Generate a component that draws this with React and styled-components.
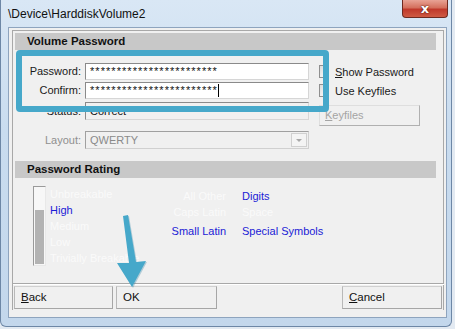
import React from "react";
import styled, { createGlobalStyle } from "styled-components";

const Global = createGlobalStyle`
  html, body { margin: 0; padding: 0; background: #e3eaf2; }
  body { font-family: "Liberation Sans", Arial, sans-serif; }
`;

const Window = styled.div`
  position: relative;
  width: 452px;
  height: 327px;
  box-sizing: border-box;
  display: flex;
  flex-direction: column;
  background: linear-gradient(180deg, #d9e7f5 0%, #c9dcef 40%, #c3d7ec 100%);
  border: 1px solid #6d87a6;
  border-top: none;
  border-radius: 0 0 6px 6px;
`;

const TitleBar = styled.div`
  height: 27px;
  display: flex;
  align-items: center;
  justify-content: space-between;
  padding-left: 7px;
`;

const Title = styled.span`
  font-size: 12px;
  color: #111;
  margin-top: 1px;
`;

const CloseButton = styled.div`
  align-self: flex-start;
  width: 46px;
  height: 18px;
  margin-right: 3px;
  box-sizing: border-box;
  border: 1px solid #6e2a20;
  border-top: none;
  border-radius: 0 0 4px 4px;
  background: linear-gradient(180deg, #e8a395 0%, #d4705d 45%, #c0392b 55%, #cf5a43 100%);
  display: flex;
  align-items: center;
  justify-content: center;
  color: #fff;
  font: bold 13px "DejaVu Sans", sans-serif;
  text-shadow: 0 0 2px #5a1a10, 0 0 1px #5a1a10;
`;

const Client = styled.div`
  flex: 1;
  margin: 0 4px 8px 7px;
  background: #f0f0f0;
  border: 1px solid #8ea4be;
  padding: 2px 2px 7px 3px;
  display: flex;
`;

const Panel = styled.div`
  flex: 1;
  border: 1px solid #a8a8a8;
  border-bottom: none;
  display: flex;
  flex-direction: column;
`;

const SectionHeader = styled.div`
  margin: ${(p) => p.$top}px 0 0 2px;
  height: 17px;
  width: 421px;
  background: #c8c8c8;
  font-size: 11.5px;
  font-weight: bold;
  color: #111;
  line-height: 17px;
  padding-left: 12px;
  box-sizing: border-box;
`;

const Form = styled.div`
  display: flex;
  flex-direction: column;
  padding-top: 13px;
`;

const Row = styled.div`
  display: grid;
  grid-template-columns: 68px 224px 107px;
  column-gap: 4px;
  align-items: start;
  margin-top: ${(p) => p.$top || 0}px;
`;

const Label = styled.label`
  text-align: right;
  font-size: 11px;
  line-height: ${(p) => p.$h || 17}px;
  color: ${(p) => (p.$disabled ? "#8f8f8f" : "#1a1a1a")};
`;

const Field = styled.div`
  height: ${(p) => p.$h || 17}px;
  box-sizing: border-box;
  border: 1px solid;
  border-color: #8a8a8a #d6d6d6 #d6d6d6 #8a8a8a;
  background: ${(p) => (p.$readOnly ? "#f0f0f0" : "#fff")};
  font-size: 11px;
  line-height: ${(p) => (p.$h || 17) - 2}px;
  padding-left: 4px;
  color: #111;
  letter-spacing: ${(p) => (p.$stars ? "1.05px" : "0")};
  display: flex;
  align-items: center;
`;

const Caret = styled.span`
  display: inline-block;
  width: 1px;
  height: 13px;
  background: #000;
`;

const Combo = styled.div`
  height: 18px;
  box-sizing: border-box;
  border: 1px solid;
  border-color: #a0a0a0 #d0d0d0 #d0d0d0 #a0a0a0;
  background: #f0f0f0;
  display: flex;
  align-items: center;
  justify-content: space-between;
  padding-left: 4px;
  font-size: 11px;
  color: #8a8a8a;
`;

const ComboArrow = styled.div`
  width: 16px;
  height: 14px;
  margin-right: 1px;
  box-sizing: border-box;
  border: 1px solid #d0d0d0;
  background: #f4f4f4;
  display: flex;
  align-items: center;
  justify-content: center;
  &::after {
    content: "";
    border-left: 3px solid transparent;
    border-right: 3px solid transparent;
    border-top: 3px solid #a8a8a8;
  }
`;

const CheckRow = styled.div`
  display: flex;
  align-items: center;
  gap: 6px;
  margin-left: 6px;
  height: 17px;
  font-size: 11px;
  color: #1a1a1a;
`;

const CheckBox = styled.span`
  width: 10px;
  height: 13px;
  box-sizing: border-box;
  border: 1px solid #8f8f8f;
  border-right: none;
  background: linear-gradient(135deg, #dcdcdc, #fff);
`;

const SideButton = styled.div`
  margin: 3px 0 0 6px;
  height: 21px;
  box-sizing: border-box;
  border: 1px solid;
  border-color: #dedede #b0b0b0 #b0b0b0 #dedede;
  font-size: 11px;
  line-height: 19px;
  padding-left: 5px;
  color: #a4a4a4;
`;

const Rating = styled.div`
  display: flex;
  height: 105px;
  padding-left: 20px;
  box-sizing: border-box;
`;

const Meter = styled.div`
  margin-top: 8px;
  width: 13px;
  height: 80px;
  box-sizing: border-box;
  border: 1px solid;
  border-color: #9a9a9a #e8e8e8 #e8e8e8 #9a9a9a;
  background: #f7f7f7;
  padding: 1px;
  display: flex;
  flex-direction: column;
  justify-content: flex-end;
`;

const MeterFill = styled.div`
  background: #b3b3b3;
`;

const Levels = styled.div`
  margin: 8px 0 0 4px;
  width: 100px;
  display: flex;
  flex-direction: column;
`;

const Level = styled.span`
  font-size: 11px;
  line-height: 16px;
  white-space: nowrap;
  color: ${(p) => (p.$on ? "#1b1bd6" : "#fafafa")};
`;

const Charsets = styled.div`
  margin-top: 10px;
  display: grid;
  grid-template-columns: 76px auto;
  column-gap: 16px;
  grid-auto-rows: 16px;
  align-content: start;
`;

const Charset = styled.span`
  font-size: 11px;
  line-height: 16px;
  white-space: nowrap;
  text-align: ${(p) => (p.$right ? "right" : "left")};
  color: ${(p) => (p.$on ? "#1b1bd6" : "#fafafa")};
  margin-top: ${(p) => (p.$last ? 3 : 0)}px;
`;

const Separator = styled.div`
  height: 1px;
  background: #a8a8a8;
  border-bottom: 1px solid #fff;
  margin-right: -1px;
`;

const ButtonRow = styled.div`
  display: flex;
  gap: 3px;
  padding: 1px 1px 0 1px;
`;

const Button = styled.div`
  width: ${(p) => p.$w || 100}px;
  height: 23px;
  box-sizing: border-box;
  border: 1px solid;
  border-color: #d0d0d0 #a6a6a6 #a6a6a6 #b8b8b8;
  font-size: 11.5px;
  line-height: 21px;
  padding-left: 6px;
  color: #111;
  margin-left: ${(p) => (p.$push ? "auto" : "0")};
`;

const Highlight = styled.div`
  position: absolute;
  left: 15px;
  top: 50px;
  width: 313px;
  height: 62px;
  box-sizing: border-box;
  border: 6px solid #46a8ca;
  border-radius: 4px;
  pointer-events: none;
`;

const Arrow = styled.svg`
  position: absolute;
  left: 110px;
  top: 210px;
  pointer-events: none;
`;

const u = (s) => <span style={{ textDecoration: "underline" }}>{s}</span>;

export default function App() {
  return (
    <>
      <Global />
      <Window>
        <TitleBar>
          <Title>\Device\HarddiskVolume2</Title>
          <CloseButton>x</CloseButton>
        </TitleBar>
        <Client>
          <Panel>
            <SectionHeader $top={2}>Volume Password</SectionHeader>
            <Form>
              <Row>
                <Label>Password:</Label>
                <Field $stars>************************</Field>
                <CheckRow>
                  <CheckBox />
                  <span>{u("S")}how Password</span>
                </CheckRow>
              </Row>
              <Row $top={2}>
                <Label>Confirm:</Label>
                <Field $stars>
                  ************************
                  <Caret />
                </Field>
                <CheckRow>
                  <CheckBox />
                  <span>Use Keyfiles</span>
                </CheckRow>
              </Row>
              <Row $top={3}>
                <Label $h={18}>Status:</Label>
                <Field $h={18} $readOnly>Correct</Field>
                <SideButton>{u("K")}eyfiles</SideButton>
              </Row>
              <Row $top={5}>
                <Label $h={18} $disabled>Layout:</Label>
                <Combo>
                  QWERTY
                  <ComboArrow />
                </Combo>
              </Row>
            </Form>
            <SectionHeader $top={12}>Password Rating</SectionHeader>
            <Rating>
              <Meter>
                <MeterFill style={{ height: `${(55 / 78) * 100}%` }} />
              </Meter>
              <Levels>
                <Level>Unbreakable</Level>
                <Level $on>High</Level>
                <Level>Medium</Level>
                <Level>Low</Level>
                <Level>Trivially Breakable</Level>
              </Levels>
              <Charsets>
                <Charset $right>All Other</Charset>
                <Charset $on>Digits</Charset>
                <Charset $right>Caps Latin</Charset>
                <Charset>Space</Charset>
                <Charset $right $on $last>Small Latin</Charset>
                <Charset $on $last>Special Symbols</Charset>
              </Charsets>
            </Rating>
            <Separator />
            <ButtonRow>
              <Button $w={99}>{u("B")}ack</Button>
              <Button $w={101}>OK</Button>
              <Button $w={100} $push>{u("C")}ancel</Button>
            </ButtonRow>
          </Panel>
        </Client>
        <Highlight />
        <Arrow width="40" height="82" viewBox="0 0 40 82">
          <polygon
            points="12,6 17,5 25,52 35,51 21,77 6,53 18,53"
            fill="#3c8aa8"
            opacity="0.35"
            transform="translate(1,1)"
          />
          <polygon points="12,6 17,5 25,52 35,51 21,77 6,53 18,53" fill="#46a8ca" />
        </Arrow>
      </Window>
    </>
  );
}
